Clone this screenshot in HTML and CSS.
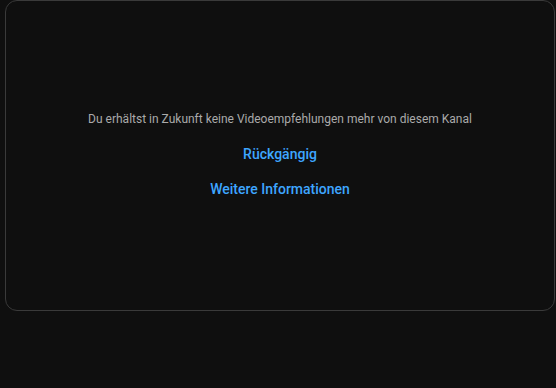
FILE: index.html
```html
<!DOCTYPE html>
<html lang="de">
<head>
<meta charset="utf-8">
<link rel="stylesheet" href="styles.css">
</head>
<body>
<div class="card">
  <p class="msg">Du erhältst in Zukunft keine Videoempfehlungen mehr von diesem Kanal</p>
  <a class="link">Rückgängig</a>
  <a class="link">Weitere Informationen</a>
</div>
</body>
</html>
```
FILE: styles.css
```css
html, body {
  margin: 0;
  padding: 0;
  background: #0f0f0f;
  width: 556px;
  height: 388px;
  overflow: hidden;
  font-family: Roboto, "Liberation Sans", sans-serif;
}
body {
  padding: 0 1px 0 5px;
  box-sizing: border-box;
}
.card {
  box-sizing: border-box;
  height: 311px;
  border: 1px solid #3a3a3a;
  border-radius: 12px;
  background: #0f0f0f;
  display: flex;
  flex-direction: column;
  align-items: center;
  justify-content: center;
  padding-bottom: 3px;
}
.msg {
  margin: 0;
  font-size: 12px;
  line-height: 18px;
  color: #aaaaaa;
}
.link {
  margin-top: 17px;
  font-size: 14px;
  line-height: 18px;
  font-weight: 500;
  color: #3ea6ff;
}
```
